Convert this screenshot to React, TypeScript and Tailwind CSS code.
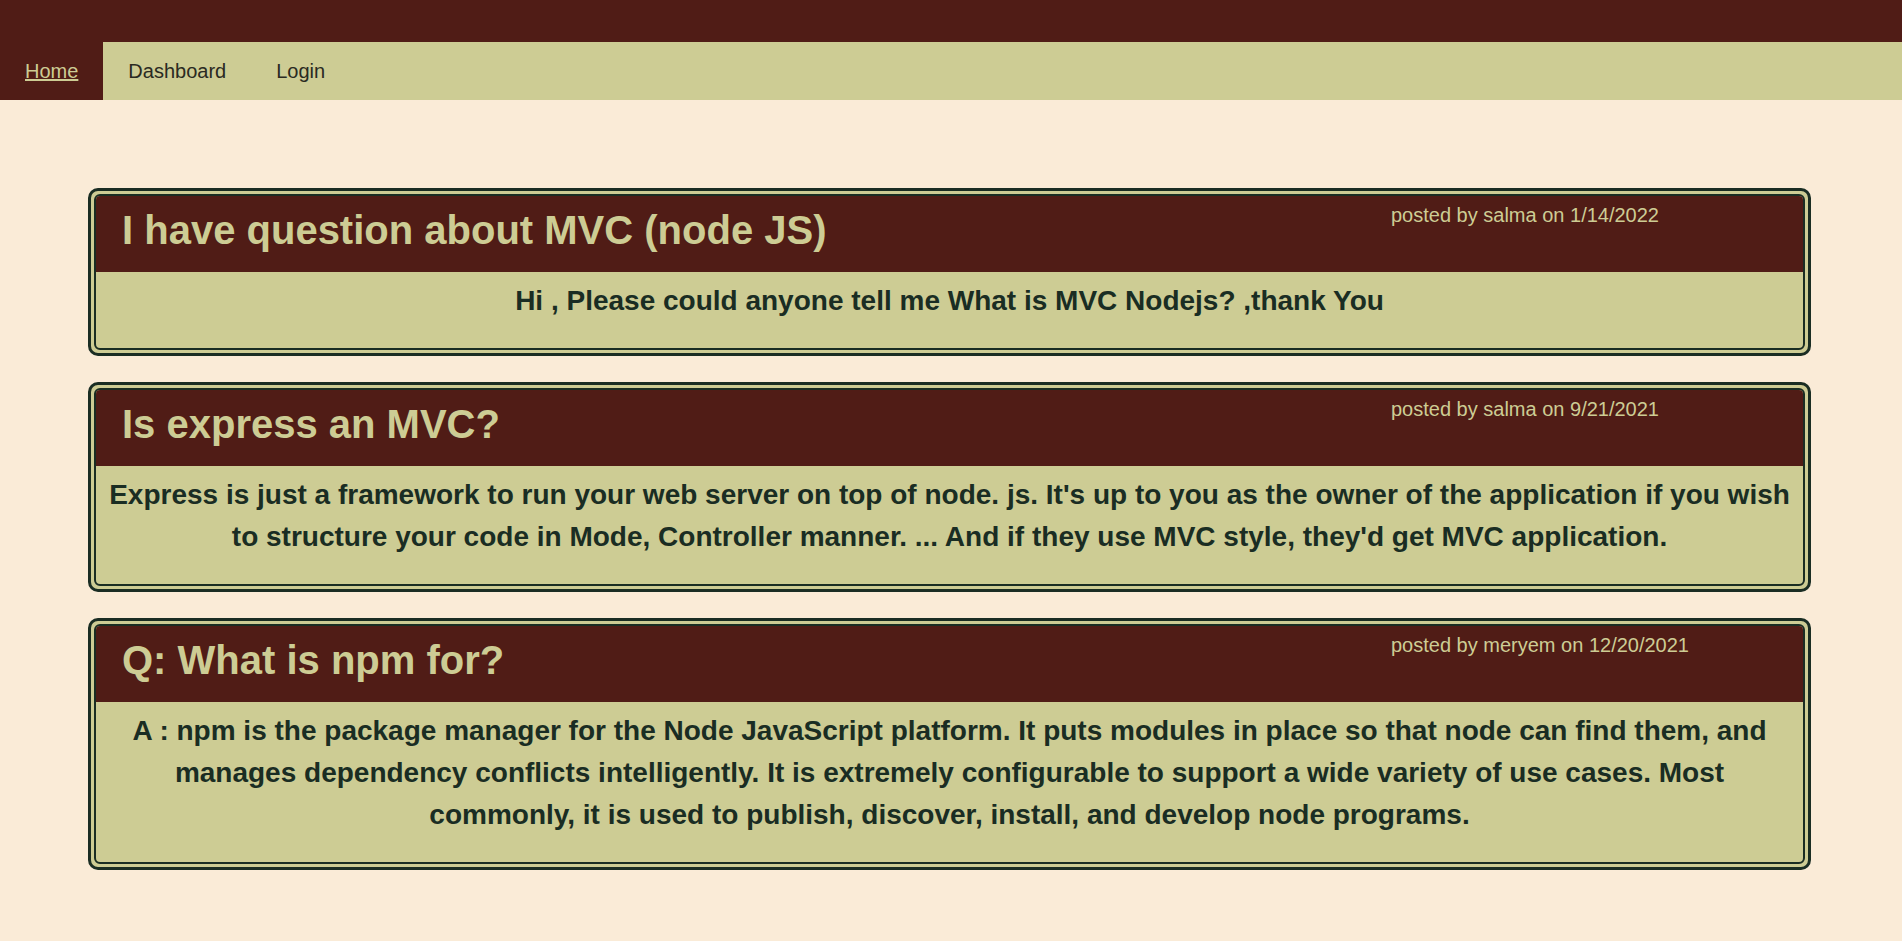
import React from "react";

type Post = {
  title: string;
  author: string;
  date: string;
  body: string;
};

const posts: Post[] = [
  {
    title: "I have question about MVC (node JS)",
    author: "salma",
    date: "1/14/2022",
    body: "Hi , Please could anyone tell me What is MVC Nodejs? ,thank You",
  },
  {
    title: "Is express an MVC?",
    author: "salma",
    date: "9/21/2021",
    body: "Express is just a framework to run your web server on top of node. js. It's up to you as the owner of the application if you wish to structure your code in Mode, Controller manner. ... And if they use MVC style, they'd get MVC application.",
  },
  {
    title: "Q: What is npm for?",
    author: "meryem",
    date: "12/20/2021",
    body: "A : npm is the package manager for the Node JavaScript platform. It puts modules in place so that node can find them, and manages dependency conflicts intelligently. It is extremely configurable to support a wide variety of use cases. Most commonly, it is used to publish, discover, install, and develop node programs.",
  },
];

function PostCard({ post }: { post: Post }) {
  return (
    <div className="rounded-[10px] border-[3px] border-[#1a2d23] bg-[#cdcc94] p-[3px]">
      <div className="overflow-hidden rounded-[6px] border-2 border-[#1a2d23]">
        <div className="flex h-[76px] bg-[#501c16]">
          <h2 className="flex-1 pl-[26px] pt-[11px] text-[40px] font-bold leading-[46px] text-[#cdcc94]">
            {post.title}
          </h2>
          <div className="w-[412px] shrink-0 pt-[8px] text-[20px] leading-[23px] text-[#cdcc94]">
            posted by {post.author} on {post.date}
          </div>
        </div>
        <p className="px-[10px] pb-[26px] pt-[8px] text-center text-[28px] font-bold leading-[42px] text-[#1a2d23]">
          {post.body}
        </p>
      </div>
    </div>
  );
}

export default function App() {
  return (
    <div
      className="min-h-[941px] bg-[#faebd7]"
      style={{ fontFamily: '"Liberation Sans", Arial, sans-serif' }}
    >
      <header className="bg-[#501c16] pt-[42px]">
        <nav className="flex h-[58px] bg-[#cdcc94] text-[20px]">
          <a href="#" className="flex items-center bg-[#501c16] px-[25px] text-[#cdcc94] underline">
            Home
          </a>
          <a href="#" className="flex items-center px-[25px] text-[#2a2a22]">
            Dashboard
          </a>
          <a href="#" className="flex items-center px-[25px] text-[#2a2a22]">
            Login
          </a>
        </nav>
      </header>

      <main className="flex flex-col gap-[26px] pl-[88px] pr-[91px] pt-[88px]">
        {posts.map((post) => (
          <PostCard key={post.title} post={post} />
        ))}
      </main>
    </div>
  );
}
